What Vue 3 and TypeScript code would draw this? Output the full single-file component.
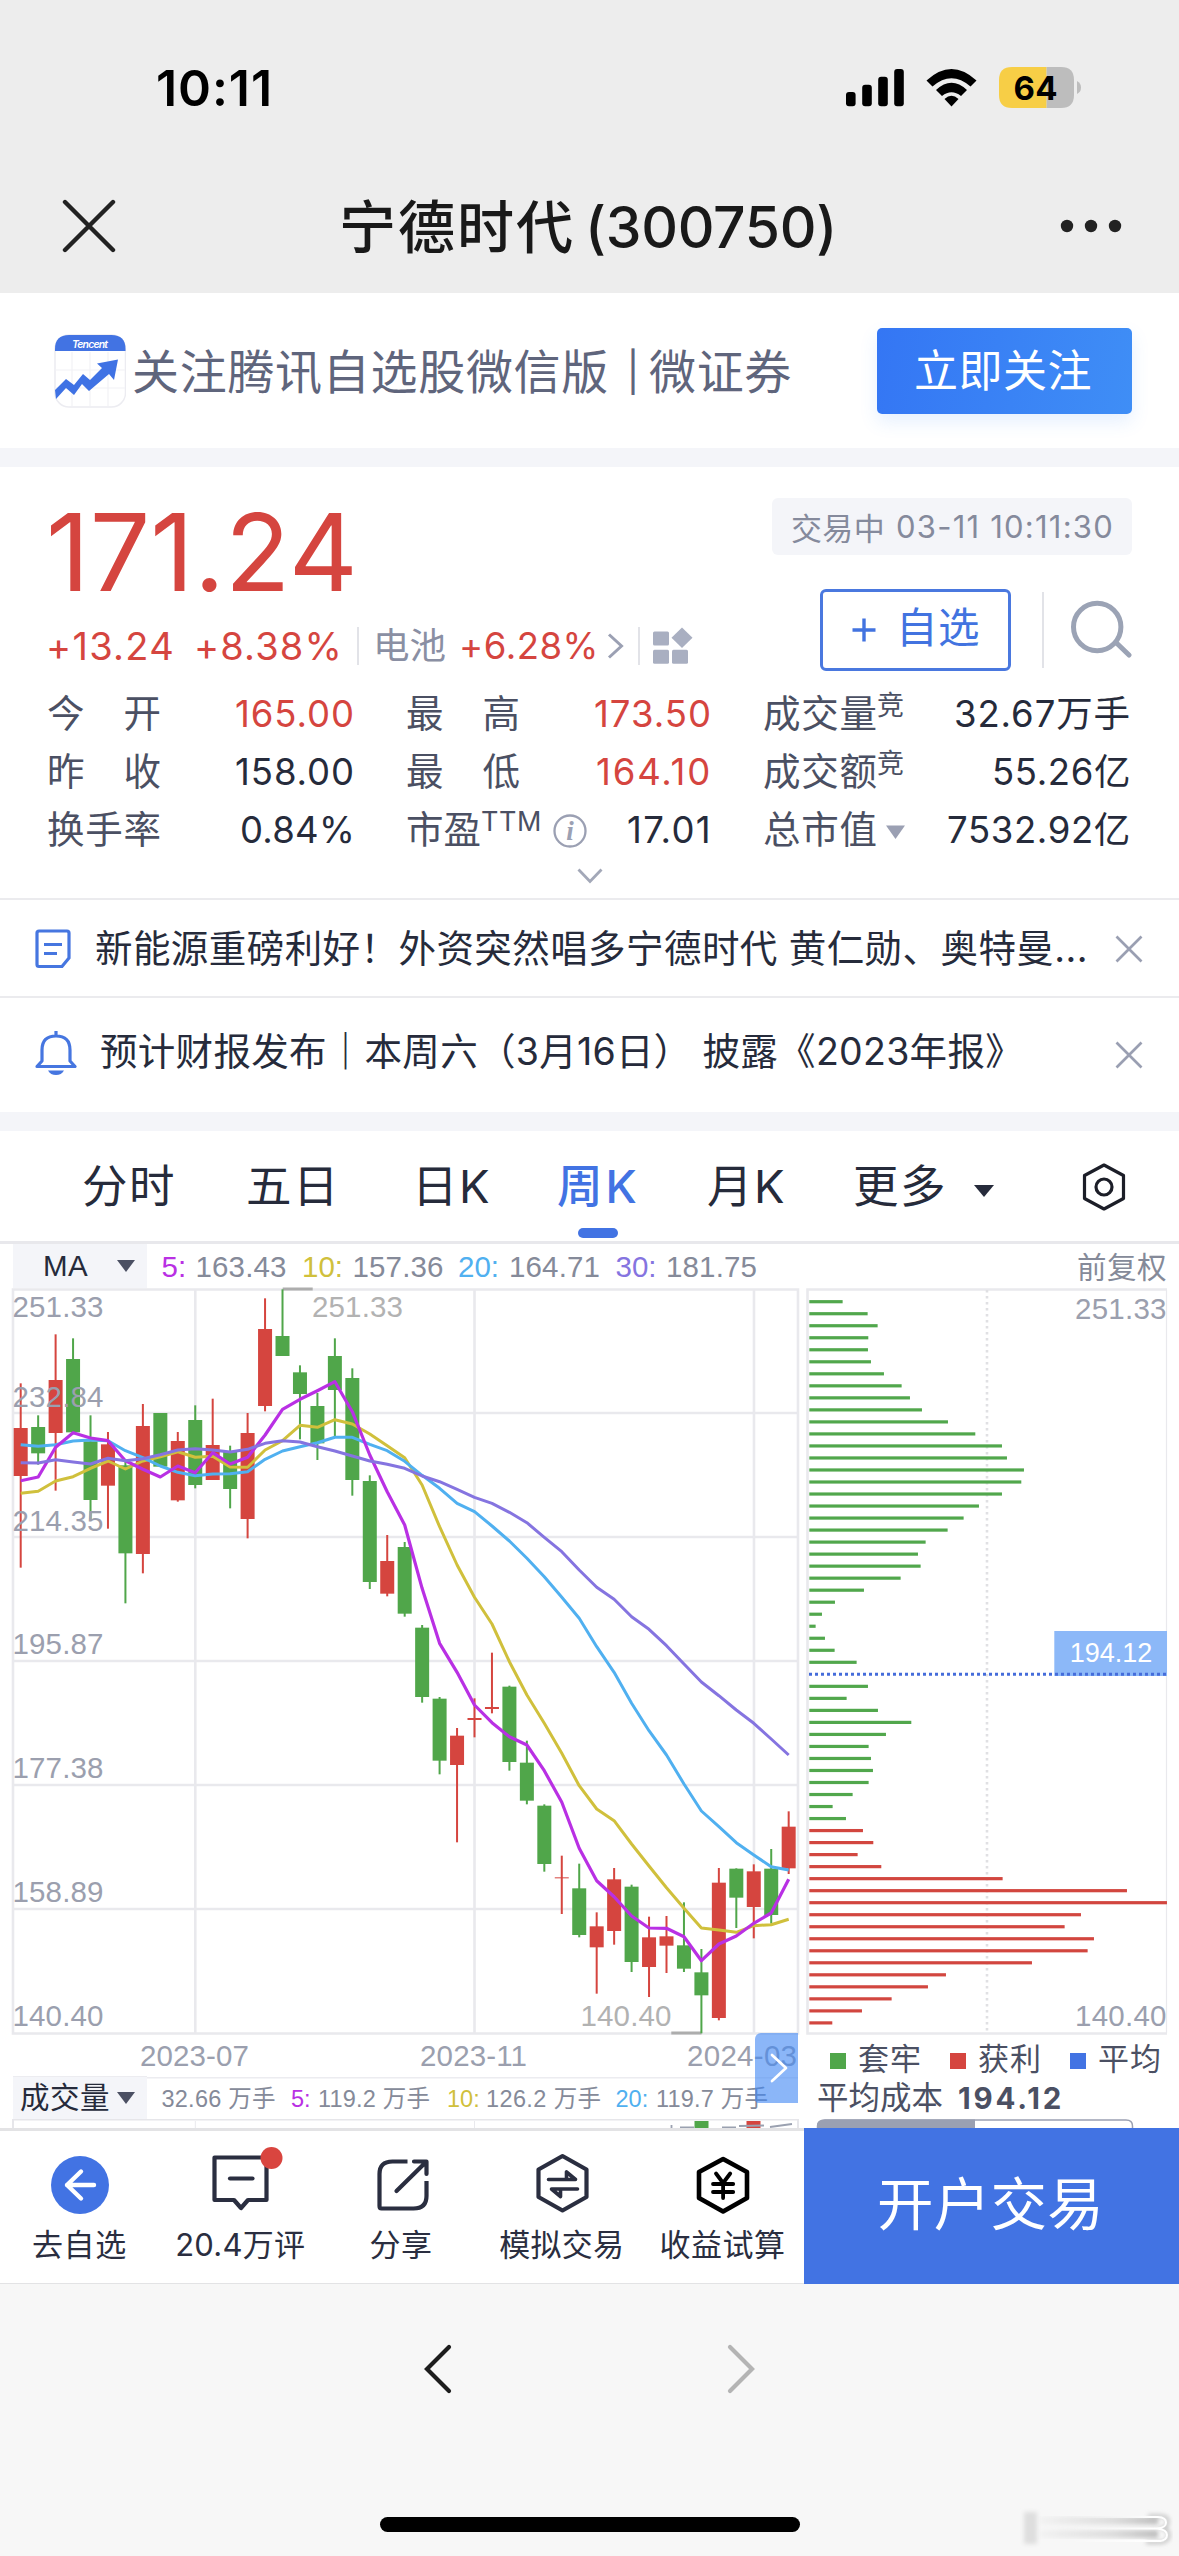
<script setup lang="ts">
interface Candle {
  x: number
  up: boolean
  high: number
  top: number
  bottom: number
  low: number
}

interface Stat {
  label: string[]
  value: string
  width: number
  red?: boolean
  sup?: string
  supWidth?: number
  info?: boolean
  caret?: boolean
}

// Spreads the letters of a label so that it fills the given width.
const vFit = {
  mounted(el: HTMLElement, binding: { value: number }) {
    const count = (el.textContent ?? '').length
    const width = el.getBoundingClientRect().width
    el.style.letterSpacing = `${(binding.value - width) / count}px`
  },
}

const stats: Stat[] = [
  { label: ['今', '开'], value: '165.00', width: 120, red: true },
  { label: ['最', '高'], value: '173.50', width: 118, red: true },
  { label: ['成', '交', '量'], value: '32.67万手', width: 177, sup: '竞', supWidth: 27 },
  { label: ['昨', '收'], value: '158.00', width: 120 },
  { label: ['最', '低'], value: '164.10', width: 116, red: true },
  { label: ['成', '交', '额'], value: '55.26亿', width: 139, sup: '竞', supWidth: 27 },
  { label: ['换', '手', '率'], value: '0.84%', width: 115 },
  { label: ['市', '盈'], value: '17.01', width: 85, sup: 'TTM', supWidth: 61, info: true },
  { label: ['总', '市', '值'], value: '7532.92亿', width: 184, caret: true },
]

// Chart rows are stored in thirds of a pixel below ORIGIN.
const ORIGIN = 1230
const py = (v: number): number => ORIGIN + v / 3
const px = (i: number): number => 20.7 + 17.454 * i

const rows: [number, number, number, number, number][] = [
  [1, 460, 594, 738, 1013], [0, 556, 591, 670, 704], [1, 313, 450, 609, 782], [0, 325, 387, 607, 607],
  [0, 556, 634, 810, 868], [1, 606, 643, 767, 896], [0, 690, 706, 970, 1120], [1, 522, 588, 972, 1030],
  [0, 549, 549, 710, 710], [1, 606, 633, 811, 815], [0, 526, 570, 765, 775], [1, 506, 645, 750, 750],
  [0, 647, 664, 777, 835], [1, 549, 609, 867, 925], [1, 205, 297, 528, 544], [0, 178, 318, 378, 378],
  [0, 406, 427, 492, 628], [0, 489, 528, 640, 690], [0, 325, 378, 480, 620], [0, 415, 444, 750, 797],
  [0, 736, 753, 1056, 1077], [1, 915, 993, 1091, 1099], [0, 936, 951, 1151, 1160], [0, 1185, 1193, 1401, 1418],
  [0, 1401, 1406, 1592, 1633], [1, 1494, 1517, 1605, 1837], [1, 1405, 1464, 1470, 1522], [1, 1268, 1431, 1437, 1450],
  [0, 1367, 1370, 1596, 1622], [0, 1532, 1598, 1712, 1723], [0, 1723, 1727, 1902, 1925], [1, 1877, 1942, 1945, 2052],
  [0, 1901, 1975, 2115, 2122], [1, 2047, 2089, 2152, 2291], [1, 1914, 1948, 2103, 2144], [0, 1964, 1970, 2196, 2226],
  [1, 2060, 2122, 2211, 2301], [1, 2058, 2119, 2147, 2229], [0, 2017, 2146, 2216, 2226], [0, 2157, 2227, 2296, 2410],
  [1, 1914, 1958, 2364, 2371], [0, 1915, 1916, 2003, 2094], [1, 1903, 1924, 2031, 2125], [0, 1857, 1916, 2055, 2081],
  [1, 1744, 1790, 1915, 1932],
]

const candles: Candle[] = rows.map(([up, high, top, bottom, low], i) => ({
  x: px(i),
  up: up === 1,
  high: py(high),
  top: py(top),
  bottom: py(bottom),
  low: py(low),
}))

const averages: { color: string; width: number; data: number[] }[] = [
  {
    color: '#d0c03c', width: 3,
    data: [790, 784, 753, 740, 715, 693, 717, 693, 680, 665, 682, 679, 711, 712, 660, 632, 586, 592, 569, 582, 612, 647, 683, 765, 890, 1005, 1102, 1182, 1295, 1395, 1480, 1570, 1667, 1737, 1772, 1842, 1908, 1973, 2035, 2094, 2100, 2107, 2087, 2084, 2068],
  },
  {
    color: '#50b0f0', width: 3,
    data: [644, 649, 644, 633, 630, 632, 662, 683, 708, 727, 737, 732, 731, 725, 688, 663, 650, 638, 622, 622, 643, 662, 694, 736, 775, 820, 845, 888, 933, 985, 1040, 1102, 1165, 1250, 1327, 1420, 1502, 1575, 1662, 1743, 1790, 1838, 1875, 1910, 1920],
  },
  {
    color: '#b930e4', width: 3.2,
    data: [752, 741, 652, 608, 624, 632, 692, 718, 741, 708, 728, 668, 702, 682, 615, 538, 508, 482, 455, 545, 675, 785, 885, 1075, 1240, 1327, 1425, 1478, 1520, 1545, 1622, 1717, 1855, 1952, 2000, 2058, 2094, 2095, 2120, 2192, 2142, 2118, 2080, 2049, 1948],
  },
  {
    color: '#8574e0', width: 3,
    data: [698, 699, 689, 696, 702, 685, 692, 686, 674, 660, 656, 660, 666, 658, 640, 632, 636, 650, 663, 678, 693, 703, 715, 738, 755, 778, 802, 820, 847, 878, 922, 965, 1020, 1072, 1108, 1160, 1198, 1247, 1302, 1356, 1397, 1440, 1480, 1527, 1575],
  },
]

const points = (data: number[]): string => data.map((v, i) => `${px(i).toFixed(1)},${py(v).toFixed(1)}`).join(' ')

const gridY = [1413, 1537, 1661, 1785, 1909]
const gridX = [195.3, 474.5, 754]

const axis: [string, number][] = [
  ['251.33', 1317], ['232.84', 1406.5], ['214.35', 1530.7], ['195.87', 1654.4],
  ['177.38', 1778.4], ['158.89', 1902.4], ['140.40', 2026],
]

// Holding cost distribution; zero marks the average cost row.
const chips = [
  158, 233, 263, 235, 234, 243, 282, 335, 360, 396, 474, 556, 636, 651, 702, 694, 636, 567, 521, 473, 407, 384, 392,
  332, 222, 135, 96, 77, 105, 134, 200, 0, 234, 170, 264, 364, 288, 236, 243, 249, 236, 188, 128, 168, 219, 250, 203,
  274, 638, 1011, 1131, 873, 824, 912, 893, 726, 468, 414, 305, 216, 127,
]
const bars = chips
  .map((end, i) => ({ y: 1301.7 + 12.02 * i - 1.6, width: (end - 58) / 3, color: i < 44 ? '#51a74c' : '#d2463f', end }))
  .filter((bar) => bar.end > 0)
</script>

<template>
  <div class="screen">
    <header class="top">
      <div class="status">
        <span v-fit="117" class="t clock">10:11</span>
        <svg class="signals" width="236" height="44" viewBox="845 66 236 44">
          <rect x="846" y="92" width="9.6" height="14.3" rx="3" />
          <rect x="862.2" y="84.7" width="9.6" height="21.6" rx="3" />
          <rect x="878.2" y="76.7" width="9.6" height="29.6" rx="3" />
          <rect x="894.2" y="69" width="9.6" height="37.3" rx="3" />
          <path d="M926.500 80.500 Q951.500 57.500 976.500 80.500 L970.500 86.500 Q951.500 70 932.500 86.500 Z" />
          <path d="M936 90 Q951.500 75.500 967 90 L961 96 Q951.500 88.500 942 96 Z" />
          <path d="M944.500 99 Q951.500 92.500 958.500 99 L951.500 106.500 Z" />
          <path d="M1012 67 H1046.600 V108 H1012 Q999 108 999 95 V80 Q999 67 1012 67 Z" fill="#f7ce46" />
          <path d="M1046.600 67 H1061 Q1074 67 1074 80 V95 Q1074 108 1061 108 H1046.600 Z" fill="#bdbdbd" />
          <path d="M1077 81 Q1081 83 1081 87.500 Q1081 92 1077 94 Z" fill="#bdbdbd" />
          <text x="1035.500" y="99.700" class="battery" text-anchor="middle" textLength="44">64</text>
        </svg>
      </div>
      <div class="nav">
        <svg width="54" height="54" viewBox="0 0 54 54"><path d="M3 3L51 51M51 3L3 51" stroke="#222" stroke-width="4.4" stroke-linecap="round" /></svg>
        <h1><span v-fit="236" class="t">宁德时代</span><span v-fit="252" class="t code">(300750)</span></h1>
        <svg width="62" height="14" viewBox="0 0 62 14" fill="#222"><circle cx="7" cy="7" r="6.200" /><circle cx="31" cy="7" r="6.200" /><circle cx="55" cy="7" r="6.200" /></svg>
      </div>
    </header>

    <section class="banner">
      <svg width="72" height="74" viewBox="54 334 72 74">
        <rect x="55" y="335" width="70.500" height="72" rx="14" fill="#fff" stroke="#ececf1" stroke-width="1.500" />
        <path d="M55 370H125M55 388H125M72 352V406M90 352V406M108 352V406" stroke="#f2f2f6" stroke-width="1.200" />
        <path d="M55 351V349Q55 335 69 335H111.500Q125.500 335 125.500 349V351Z" fill="#4273e3" />
        <text x="90" y="347.500" text-anchor="middle" textLength="36" class="brand">Tencent</text>
        <path d="M55 390L66 379L74 385L83 374L90 380L102 368L97 363.500L118 359.500L114 380L109 374L89 391L82 384L74 395L66 388L56 399Z" fill="#3f72e4" />
      </svg>
      <span v-fit="477" class="t slogan">关注腾讯自选股微信版</span><span class="t slogan bar">|</span><span v-fit="143" class="t slogan tail">微证券</span>
      <button class="follow"><span v-fit="178" class="t">立即关注</span></button>
    </section>
    <div class="strip"></div>

    <section class="quote">
      <div class="head">
        <div class="left">
          <div v-fit="312" class="t price">171.24</div>
          <div class="change">
            <span v-fit="129" class="t red">+13.24</span>
            <span v-fit="149" class="t red pct">+8.38%</span>
            <i class="rule"></i>
            <span v-fit="73" class="t sector">电池</span>
            <span v-fit="140" class="t red sect-pct">+6.28%</span>
            <svg class="more" width="17" height="28" viewBox="0 0 17 28"><path d="M2 2.500L14.500 14L2 25.500" fill="none" stroke="#9ba0b3" stroke-width="3" /></svg>
            <i class="rule"></i>
            <svg class="blocks" width="40" height="38" viewBox="652 626 40 38" fill="#a9afc1">
              <rect x="652" y="630.500" width="16" height="14" rx="1.500" /><rect x="652" y="648.700" width="16" height="14" rx="1.500" /><rect x="671" y="648.700" width="16" height="14" rx="1.500" />
              <path d="M681 626.500L691.500 636.700L681 647L670.500 636.700Z" />
            </svg>
          </div>
        </div>
        <div class="right">
          <div class="tag"><span v-fit="94" class="t cn">交易中</span><span v-fit="218" class="t">03-11 10:11:30</span></div>
          <div class="actions">
            <button class="add">
              <svg width="24" height="24" viewBox="0 0 24 24"><path d="M12 0.500V23.500M0.500 12H23.500" stroke="#4273e0" stroke-width="3.400" /></svg>
              <span v-fit="84" class="t">自选</span>
            </button>
            <i class="rule tall"></i>
            <svg width="62" height="62" viewBox="1070 598 62 62" fill="none" stroke="#9ba3b5" stroke-width="5" stroke-linecap="round">
              <circle cx="1097.200" cy="626" r="23.700" /><path d="M1116 641.500L1129 654" />
            </svg>
          </div>
        </div>
      </div>
      <div class="stats">
        <div v-for="stat in stats" :key="stat.value" class="stat">
          <span class="name" :class="{ short: stat.sup === 'TTM' }"><b v-for="ch in stat.label" :key="ch">{{ ch }}</b></span>
          <span v-if="stat.sup" v-fit="stat.supWidth ?? 27" class="t sup">{{ stat.sup }}</span>
          <svg v-if="stat.info" class="info" width="36" height="36" viewBox="0 0 36 36">
            <circle cx="18" cy="18" r="15.500" fill="none" stroke="#9ba0b3" stroke-width="2.300" />
            <text x="18" y="27" text-anchor="middle">i</text>
          </svg>
          <svg v-if="stat.caret" class="caret" width="19" height="14" viewBox="0 0 19 14"><path d="M0 0.500H19L9.500 14Z" fill="#9ba0b3" /></svg>
          <span v-fit="stat.width" class="t value" :class="{ red: stat.red }">{{ stat.value }}</span>
        </div>
      </div>
      <svg class="expand" width="26" height="16" viewBox="0 0 26 16"><path d="M1.500 1.500L13 13.500L24.500 1.500" fill="none" stroke="#a3a8b8" stroke-width="2.800" /></svg>
    </section>

    <section class="news first">
      <svg width="36" height="40" viewBox="0 0 36 40" fill="none" stroke="#4676e0" stroke-width="3.200">
        <path d="M4 2H32Q34 2 34 4V29L27 37.500H4Q2 37.500 2 35.500V4Q2 2 4 2Z" /><path d="M9 15.500H27M9 24.500H22" />
      </svg>
      <span v-fit="993" class="t">新能源重磅利好！外资突然唱多宁德时代 黄仁勋、奥特曼...</span>
      <svg class="close" width="28" height="28" viewBox="0 0 28 28"><path d="M1.500 1.500L26.500 26.500M26.500 1.500L1.500 26.500" stroke="#9a9fb2" stroke-width="2.700" /></svg>
    </section>
    <section class="news second">
      <svg width="42" height="46" viewBox="0 0 42 46" fill="none" stroke="#4676e0" stroke-width="3.200">
        <path d="M21 1V6M2 36.500L7 31V20Q7 6 21 6Q35 6 35 20V31L40 36.500Z" stroke-linejoin="round" />
        <path d="M13 40.500H29Q26.500 45 21 45Q15.500 45 13 40.500Z" fill="#4676e0" stroke="none" />
      </svg>
      <span v-fit="923" class="t">预计财报发布<b>｜</b>本周六（3月16日） 披露《2023年报》</span>
      <svg class="close" width="28" height="28" viewBox="0 0 28 28"><path d="M1.500 1.500L26.500 26.500M26.500 1.500L1.500 26.500" stroke="#9a9fb2" stroke-width="2.700" /></svg>
    </section>
    <div class="strip"></div>

    <nav class="tabs">
      <span v-fit="94" class="t a">分时</span>
      <span v-fit="94" class="t b">五日</span>
      <span v-fit="79" class="t c">日K</span>
      <span v-fit="83" class="t d active">周K</span>
      <span v-fit="79" class="t e">月K</span>
      <span v-fit="94" class="t f">更多</span>
      <svg class="drop" width="20" height="12" viewBox="0 0 20 12"><path d="M0 0H20L10 12Z" fill="#262b3b" /></svg>
      <svg class="gear" width="46" height="50" viewBox="0 0 46 50" fill="none" stroke="#1c1e28" stroke-width="3.200" stroke-linejoin="round">
        <path d="M23 3L42.500 13.500V36.500L23 47L3.500 36.500V13.500Z" /><circle cx="23" cy="25" r="8" />
      </svg>
    </nav>

    <section class="kline">
      <div class="indicator">
        <div class="picker"><span v-fit="45" class="t">MA</span><svg width="18" height="12" viewBox="0 0 18 12"><path d="M0 0H18L9 12Z" fill="#4b5063" /></svg></div>
        <svg width="660" height="44" viewBox="150 1244 660 44" class="legend big">
          <text x="161.500" y="1276.700" fill="#b930e4">5:</text><text x="195.500" y="1276.700" textLength="91">163.43</text>
          <text x="302" y="1276.700" fill="#d0c03c">10:</text><text x="352.500" y="1276.700" textLength="91">157.36</text>
          <text x="458" y="1276.700" fill="#50b0f0">20:</text><text x="509" y="1276.700" textLength="91">164.71</text>
          <text x="615.500" y="1276.700" fill="#8574e0">30:</text><text x="666" y="1276.700" textLength="91">181.75</text>
        </svg>
        <span v-fit="90" class="t adjust">前复权</span>
      </div>

      <svg class="plot" width="1179" height="789" viewBox="0 1288 1179 789">
        <g stroke="#e9e9ed" stroke-width="2.600" fill="none">
          <path v-for="y in gridY" :key="y" :d="`M13 ${y}H798`" />
          <path v-for="x in gridX" :key="x" :d="`M${x} 1290V2033`" />
          <path d="M13 1289.500H798V2033.500H13Z" />
          <path d="M1166.500 1290V2033" stroke-width="1.200" /><path d="M1167 1289.500H807.500V2033.500H1167" />
        </g>
        <path d="M987 1290V2033" stroke="#e0e0e3" stroke-width="2.600" stroke-dasharray="2.600 3.400" />

        <path d="M282.700 1289H312.700M671.300 2033H701.500" stroke="#adadad" stroke-width="3" />
        <g v-for="c in candles" :key="c.x" :fill="c.up ? '#d5453f' : '#50a64a'">
          <rect :x="c.x - 1" :y="c.high" width="2" :height="c.low - c.high" />
          <rect :x="c.x - 7" :y="c.top" width="14" :height="c.bottom - c.top" />
        </g>
        <polyline v-for="line in averages" :key="line.color" :points="points(line.data)" :stroke="line.color" :stroke-width="line.width" fill="none" stroke-linejoin="round" />

        <g class="axis">
          <text v-for="[label, y] in axis" :key="label" x="12.500" :y="y" textLength="91">{{ label }}</text>
          <text x="312" y="1317" fill="#b2b2b2" textLength="91">251.33</text>
          <text x="580.500" y="2026" fill="#b2b2b2" textLength="91">140.40</text>
          <text x="140" y="2065.700" textLength="109">2023-07</text>
          <text x="420" y="2065.700" textLength="107">2023-11</text>
          <text x="687" y="2065.700" textLength="110">2024-03</text>
          <text x="1075" y="1319" textLength="91.500">251.33</text>
          <text x="1075" y="2026.300" textLength="91.500">140.40</text>
        </g>

        <rect v-for="bar in bars" :key="bar.y" x="809.300" :y="bar.y" :width="bar.width" height="3.200" :fill="bar.color" />
        <rect x="1054.300" y="1631" width="112.700" height="45" fill="#8cb8f8" />
        <text x="1111" y="1662.300" class="tip" text-anchor="middle">194.12</text>
        <path d="M809 1674.300H1167" stroke="#456cda" stroke-width="3" stroke-dasharray="3 3" />

        <g class="key">
          <rect x="830" y="2053" width="16" height="16" fill="#50a64a" /><text x="858" y="2069.500" textLength="63">套牢</text>
          <rect x="950" y="2053" width="16" height="16" fill="#d5453f" /><text x="978" y="2069.500" textLength="63">获利</text>
          <rect x="1070" y="2053" width="16" height="16" fill="#4273e3" /><text x="1098" y="2069.500" textLength="63">平均</text>
        </g>
      </svg>

      <div class="volume">
        <div class="picker"><span v-fit="90" class="t">成交量</span><svg width="18" height="12" viewBox="0 0 18 12"><path d="M0 0H18L9 12Z" fill="#4b5063" /></svg></div>
        <svg width="655" height="42" viewBox="147 2077 655 42" class="legend small">
          <text x="161.500" y="2106.500" textLength="114">32.66 万手</text>
          <text x="291" y="2106.500" fill="#b930e4">5:</text><text x="318" y="2106.500" textLength="112">119.2 万手</text>
          <text x="447" y="2106.500" fill="#d0c03c">10:</text><text x="486" y="2106.500" textLength="115">126.2 万手</text>
          <text x="615.500" y="2106.500" fill="#50b0f0">20:</text><text x="656" y="2106.500" textLength="112">119.7 万手</text>
        </svg>
        <span v-fit="126" class="t cost">平均成本</span><strong v-fit="106" class="t">194.12</strong>
      </div>
      <svg class="peek" width="1179" height="9" viewBox="0 2119 1179 9">
        <path d="M12 2119.500H798V2128M13 2119V2128" fill="none" stroke="#e6e6ea" stroke-width="2" />
        <path d="M195.300 2121V2128M474.500 2121V2128" stroke="#e9e9ed" stroke-width="1" />
        <rect x="694.500" y="2121" width="14" height="7" fill="#50a64a" /><rect x="746.500" y="2121" width="14" height="7" fill="#d5453f" />
        <path d="M671.500 2125V2128M680 2127.500H694M722 2127.500H736M739 2126L764 2125.500M770 2127L792 2124" stroke="#9aa1b0" stroke-width="1.800" />
        <path d="M817.500 2128V2126Q817.500 2120 825 2120H1126Q1132.500 2120 1132.500 2126V2128" fill="#fff" stroke="#9aa0b2" stroke-width="1.500" />
        <path d="M817 2128V2126Q817 2119.500 825 2119.500H975V2128Z" fill="#9aa0b2" />
      </svg>
      <button class="next"><svg width="20" height="32" viewBox="0 0 20 32"><path d="M3 3L17 16L3 29" fill="none" stroke="#fff" stroke-width="2.700" stroke-linecap="round" stroke-linejoin="round" /></svg></button>
    </section>

    <footer class="toolbar">
      <div class="item">
        <svg width="70" height="66" viewBox="45 2150 70 66"><circle cx="80" cy="2185" r="29" fill="#4273e3" /><path d="M81 2171.500L67 2185L81 2198.500M67 2185H94" fill="none" stroke="#fff" stroke-width="4.400" stroke-linecap="round" stroke-linejoin="round" /></svg>
        <span v-fit="95" class="t">去自选</span>
      </div>
      <div class="item">
        <svg width="90" height="66" viewBox="195.500 2146 90 66" class="lift" fill="none" stroke="#2a2e40" stroke-width="4.200" stroke-linejoin="round">
          <path d="M214 2157.500H266V2200H247.500L240.500 2208L233.500 2200H214Z" /><path d="M229.500 2178.500H252" stroke-linecap="round" /><circle cx="271" cy="2158" r="11" fill="#d9453f" stroke="none" />
        </svg>
        <span v-fit="130" class="t">20.4万评</span>
      </div>
      <div class="item">
        <svg width="70" height="66" viewBox="366.500 2150 70 66" fill="none" stroke="#2a2e40" stroke-width="4.200">
          <path d="M407 2161.500H392Q379 2161.500 379 2174V2206Q379 2208.500 381 2208.500H413Q426 2208.500 426 2196V2181" /><path d="M413.500 2161.500H426V2174M425.500 2162L396 2191" stroke-linejoin="round" stroke-linecap="round" />
        </svg>
        <span v-fit="63" class="t">分享</span>
      </div>
      <div class="item">
        <svg width="70" height="66" viewBox="527.500 2150 70 66" fill="none" stroke="#2a2e40" stroke-width="4.200" stroke-linejoin="round">
          <path d="M562 2156L586 2169.500V2197L562 2210.500L538 2197V2169.500Z" /><path d="M548 2179.500H575L566 2172V2179M577 2189H551L560 2196.500V2190" stroke-width="3.600" stroke-linecap="round" />
        </svg>
        <span v-fit="125" class="t">模拟交易</span>
      </div>
      <div class="item">
        <svg width="70" height="66" viewBox="689.500 2150 70 66" fill="none" stroke="#000" stroke-width="4.600" stroke-linejoin="round">
          <path d="M723.600 2159L747.500 2172V2198L723.600 2211.500L699.500 2198V2172Z" /><path d="M716.500 2173.500L723.600 2183L730.700 2173.500M723.600 2183V2198M713.500 2184H733.700M713.500 2192H733.700" stroke-width="3.800" stroke-linecap="round" />
        </svg>
        <span v-fit="126" class="t">收益试算</span>
      </div>
      <button class="open"><span v-fit="227" class="t">开户交易</span></button>
    </footer>

    <div class="browser">
      <div class="arrows">
        <svg width="30" height="50" viewBox="0 0 30 50"><path d="M26 3L4 25L26 47" fill="none" stroke="#1d1d1d" stroke-width="4.200" stroke-linecap="round" /></svg>
        <svg width="30" height="50" viewBox="0 0 30 50"><path d="M4 3L26 25L4 47" fill="none" stroke="#b4b4b4" stroke-width="4.200" stroke-linecap="round" /></svg>
      </div>
      <div class="home"></div>
      <svg class="smear" width="158" height="50" viewBox="1015 2504 158 50">
        <defs>
          <linearGradient id="fade" gradientUnits="userSpaceOnUse" x1="1038" y1="0" x2="1162" y2="0">
            <stop offset="0" stop-color="#cfcfcf" stop-opacity="0.120" /><stop offset="0.600" stop-color="#cacaca" stop-opacity="0.600" /><stop offset="1" stop-color="#b9b9b9" />
          </linearGradient>
          <linearGradient id="shine" gradientUnits="userSpaceOnUse" x1="1070" y1="0" x2="1150" y2="0">
            <stop offset="0" stop-color="#fff" stop-opacity="0" /><stop offset="1" stop-color="#fff" />
          </linearGradient>
          <filter id="soft" x="-30%" y="-30%" width="160%" height="160%"><feGaussianBlur stdDeviation="2" /></filter>
        </defs>
        <rect x="1024" y="2512" width="13" height="32" fill="#dedede" filter="url(#soft)" />
        <path d="M1040 2520.500H1158M1040 2534H1158" stroke="url(#fade)" stroke-width="8" filter="url(#soft)" />
        <path d="M1148 2516H1160Q1168 2516 1168 2521Q1168 2527 1163 2528Q1169 2530 1169 2535Q1169 2542 1160 2542.500H1146" fill="none" stroke="#bcbcbc" stroke-width="3" filter="url(#soft)" />
        <path d="M1070 2517H1158Q1166 2517.500 1166 2522.500Q1166 2528 1157 2528.500H1070M1157 2528.500Q1167 2529.500 1167 2535Q1167 2541 1158 2541H1070" fill="none" stroke="url(#shine)" stroke-width="2" />
      </svg>
    </div>
  </div>
</template>

<style>
body {
  margin: 0;
}
</style>

<style scoped>
.screen {
  width: 1179px;
  height: 2556px;
  overflow: hidden;
  background: #fff;
  color: #262b3b;
  font-family: Inter, 'Noto Sans CJK SC', sans-serif;
}
svg {
  display: block;
  flex: none;
}
button {
  padding: 0;
  border: 0;
  font-family: inherit;
}
.t {
  display: inline-block;
  flex: none;
  white-space: pre;
}
.red {
  color: #d5453f;
}

.top {
  height: 293px;
  background: #ededed;
}
.status {
  display: flex;
  justify-content: space-between;
  height: 160px;
  padding: 0 98px 0 156px;
}
.clock {
  margin-top: 58px;
  font-size: 50px;
  line-height: 60px;
  font-weight: 600;
  color: #000;
}
.signals {
  margin-top: 66px;
}
.battery {
  font-size: 33px;
  font-weight: 700;
}
.nav {
  display: flex;
  align-items: center;
  justify-content: space-between;
  height: 132px;
  padding: 0 57px 0 62px;
}
.nav h1 {
  display: flex;
  align-items: center;
  margin: 3px 0 0;
  font-size: 57px;
  line-height: 70px;
  font-weight: 500;
  color: #191919;
}
.code {
  margin-left: 10px;
}

.banner {
  display: flex;
  align-items: center;
  height: 155px;
  padding: 0 47px 0 54px;
}
.brand {
  font-size: 10.5px;
  font-weight: 600;
  font-style: italic;
  fill: #fff;
}
.slogan {
  margin: 2px 0 0 6px;
  font-size: 47px;
  line-height: 60px;
  color: #5f657c;
}
.slogan.bar {
  width: 40px;
  margin-left: 4px;
  font-size: 39px;
  text-align: center;
}
.slogan.tail {
  margin-left: -4px;
}
.follow {
  width: 255px;
  height: 86px;
  margin-left: auto;
  padding-right: 3px;
  border-radius: 5px;
  background: linear-gradient(100deg, #3476f4, #3f8ef6);
  box-shadow: 0 8px 18px rgba(63, 142, 246, 0.13);
  color: #fff;
  font-size: 44px;
  line-height: 84px;
}
.strip {
  height: 19px;
  background: #f4f5f9;
}

.quote {
  height: 433px;
  border-bottom: 2px solid #ebebee;
  box-sizing: border-box;
}
.head {
  display: flex;
  justify-content: space-between;
  height: 218px;
  padding: 0 47px 0 46px;
}
.price {
  margin-top: 30px;
  font-size: 107px;
  line-height: 110px;
  color: #d5453f;
}
.change {
  display: flex;
  align-items: center;
  height: 40px;
  margin-top: 19px;
  font-size: 38px;
  line-height: 40px;
}
.pct {
  margin-left: 19px;
}
.rule {
  width: 2px;
  height: 38px;
  margin-left: 14px;
  background: #e2e3e8;
}
.sector {
  margin-left: 14px;
  font-size: 36.5px;
  color: #8a8fa3;
}
.sect-pct {
  margin-left: 13px;
  font-size: 36.5px;
}
.more {
  margin-left: 8px;
}
.blocks {
  margin-left: 13px;
}
.right {
  display: flex;
  flex-direction: column;
  align-items: flex-end;
}
.tag {
  display: flex;
  align-items: center;
  height: 57px;
  margin-top: 31px;
  padding: 0 18px 0 19px;
  border-radius: 6px;
  background: #f4f5f9;
  font-size: 31px;
  color: #858a9c;
}
.tag .cn {
  margin-right: 11px;
}
.actions {
  display: flex;
  align-items: center;
  margin-top: 34px;
}
.add {
  display: flex;
  align-items: center;
  justify-content: space-between;
  width: 191px;
  height: 82px;
  padding: 0 28px 0 29px;
  box-sizing: border-box;
  border: 3px solid #4a78df;
  border-radius: 6px;
  background: #fff;
  color: #4273e0;
  font-size: 41.5px;
  line-height: 60px;
}
.add .t {
  margin-top: -4px;
}
.tall {
  height: 76px;
  margin: 0 26px 0 31px;
}
.stats {
  display: grid;
  grid-template-columns: 308px 306px 368px;
  column-gap: 51px;
  grid-auto-rows: 58px;
  padding-left: 47px;
}
.stat {
  display: flex;
  align-items: center;
  line-height: 58px;
  font-size: 36.5px;
}
.name {
  display: flex;
  justify-content: space-between;
  width: 114px;
  font-size: 37.5px;
  color: #4b5063;
}
.name.short {
  width: 75px;
}
.name b,
.news b {
  font-weight: 400;
}
.news b {
  font-weight: 700;
}
.sup {
  margin: -16px 0 0 0;
  font-size: 27px;
  color: #4b5063;
}
.info {
  margin: 2px 0 0 10px;
}
.info text {
  font: italic bold 27px 'Liberation Serif', serif;
  fill: #9ba0b3;
}
.caret {
  margin: 3px 0 0 9px;
}
.value {
  margin-left: auto;
}
.expand {
  margin: 9px auto 0 577px;
}

.news {
  display: flex;
  align-items: center;
  padding: 0 36px 0 35px;
  font-size: 37.5px;
  line-height: 50px;
}
.news.first {
  height: 96px;
  padding-top: 1px;
  box-sizing: border-box;
  height: 98px;
  border-bottom: 2px solid #ebebee;
}
.news.first .t {
  margin-left: 24px;
}
.news.second {
  height: 114px;
}
.news.second svg {
  margin-bottom: 5px;
}
.news.second .t {
  margin: 0 0 6px 23px;
}
.news.second .close {
  margin-bottom: 0;
}
.close {
  margin-left: auto;
}

.tabs {
  display: flex;
  height: 110px;
  border-bottom: 3px solid #e8e8ec;
  font-size: 45.5px;
  line-height: 112px;
}
.a { margin-left: 82px; }
.b { margin-left: 70px; }
.c { margin-left: 72px; }
.d { margin-left: 66px; }
.e { margin-left: 67px; }
.f { margin-left: 67px; }
.active {
  position: relative;
  height: 110px;
  color: #4273e3;
  font-weight: 500;
}
.active::after {
  content: '';
  position: absolute;
  left: 21px;
  bottom: 3px;
  width: 40px;
  height: 10px;
  border-radius: 5px;
  background: #4273e3;
}
.drop {
  margin: 54px 0 0 27px;
}
.gear {
  margin: 31px 0 0 87px;
}

.kline {
  position: relative;
}
.indicator {
  display: flex;
  height: 44px;
}
.picker {
  display: flex;
  align-items: center;
  justify-content: flex-end;
  gap: 29px;
  width: 122px;
  margin-left: 13px;
  padding-right: 12px;
  background: #f4f5f9;
  font-family: 'Liberation Sans', 'Noto Sans CJK SC', sans-serif;
  font-size: 29.5px;
  line-height: 42px;
}
.indicator svg.legend {
  margin-left: 3px;
}
.legend {
  font-family: 'Liberation Sans', 'Noto Sans CJK SC', sans-serif;
  fill: #858a99;
}
.big {
  font-size: 29.5px;
}
.small {
  font-size: 23.5px;
}
.adjust {
  margin-left: auto;
  margin-right: 12px;
  font-size: 29.5px;
  line-height: 46px;
  color: #858a99;
}
.plot {
  overflow: visible;
}
.axis {
  font-family: 'Liberation Sans', sans-serif;
  font-size: 29.5px;
  fill: #9b9fae;
}
.tip {
  font-family: 'Liberation Sans', sans-serif;
  font-size: 27px;
  fill: #fff;
}
.key {
  font-size: 31px;
  fill: #4b5063;
}
.volume {
  display: flex;
  align-items: center;
  height: 42px;
}
.volume .picker {
  gap: 7px;
  height: 42px;
  box-shadow: 0 -1px 0 #ececf0;
}
.volume .legend {
  box-shadow: inset -4px 0 0 #fff, inset 0 1.5px 0 #ececf0;
}
.cost {
  margin-left: 15px;
  font-size: 31.5px;
  line-height: 42px;
  color: #4b5063;
}
.volume strong {
  margin-left: 15px;
  font-size: 29.5px;
  line-height: 42px;
  font-weight: 700;
  color: #4b5063;
}
.next {
  position: absolute;
  left: 755px;
  top: 789px;
  display: flex;
  align-items: center;
  justify-content: center;
  width: 43px;
  height: 70px;
  padding-left: 4px;
  border-radius: 6px 0 0 4px;
  background: rgba(65, 135, 244, 0.61);
}

.toolbar {
  display: flex;
  height: 156px;
}
.item {
  display: flex;
  flex-direction: column;
  align-items: center;
  width: 160.8px;
  box-sizing: border-box;
  padding-top: 19px;
  border-top: 3px solid #e3e3e5;
  border-bottom: 1px solid #e3e3e5;
  font-size: 31px;
  line-height: 44px;
  color: #2a2e40;
}
.item .t {
  margin-top: 7px;
  margin-right: 2px;
}
.lift {
  margin-top: -4px;
  margin-bottom: 4px;
}
.open {
  width: 375px;
  height: 157px;
  padding-right: 2px;
  background: #4273e3;
  color: #fff;
  font-size: 56.5px;
  line-height: 149px;
}
.open .t {
  margin-bottom: 4px;
}

.browser {
  position: relative;
  height: 272px;
  background: #f7f7f7;
}
.arrows {
  display: flex;
  gap: 273px;
  height: 50px;
  padding: 60px 0 0 423px;
}
.home {
  width: 420px;
  height: 15px;
  margin: 123px 0 0 380px;
  border-radius: 8px;
  background: #000;
}
.smear {
  position: absolute;
  right: 6px;
  bottom: 2px;
}
</style>
